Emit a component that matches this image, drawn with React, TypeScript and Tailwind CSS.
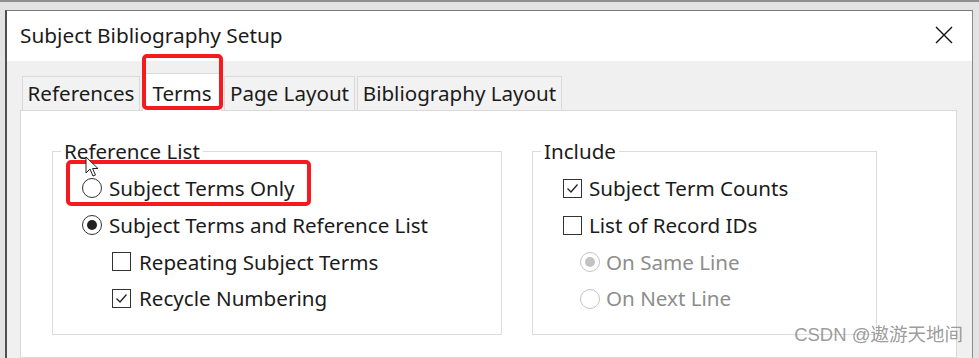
import React from "react"

const font = { fontFamily: '"Noto Sans", "Open Sans", sans-serif' }

function Radio({ checked, disabled }: { checked?: boolean; disabled?: boolean }) {
  return (
    <span
      className={`flex h-[20px] w-[20px] shrink-0 items-center justify-center rounded-full border bg-white ${
        disabled ? "border-[#c4c4c4]" : "border-[#333]"
      }`}
    >
      {checked && (
        <span className={`h-[10px] w-[10px] rounded-full ${disabled ? "bg-[#c2c2c2]" : "bg-[#222]"}`} />
      )}
    </span>
  )
}

function Check({ checked }: { checked?: boolean }) {
  return (
    <span className="flex h-[19px] w-[19px] shrink-0 items-center justify-center border border-[#333] bg-white">
      {checked && (
        <svg width="13" height="11" viewBox="0 0 13 11" fill="none">
          <path d="M1.5 5.5 L5 9 L11.5 1.5" stroke="#222" strokeWidth="1.3" />
        </svg>
      )}
    </span>
  )
}

function Row({ children, className = "" }: { children: React.ReactNode; className?: string }) {
  return <div className={`flex h-[36.8px] items-center ${className}`}>{children}</div>
}

export default function App() {
  return (
    <div
      className="relative flex h-[358px] w-[979px] flex-col overflow-hidden bg-[#e3e3e3] text-[#1b1b1b]"
      style={font}
    >
      {/* fond derrière la boîte */}
      <div className="h-[2px] w-full bg-[#8e8e8e]" />

      {/* boîte de dialogue */}
      <div className="ml-[5px] mt-[8px] flex w-[968px] flex-1 flex-col border-l-2 border-r border-t border-l-[#4f4f4f] border-r-[#8a8a8a] border-t-[#7a7a7a]">
        {/* titre */}
        <div className="flex h-[50px] items-center justify-between bg-white pb-[2px] pl-[13px] pr-[19px]">
          <span className="text-[20.8px] leading-none">Subject Bibliography Setup</span>
          <svg width="18" height="18" viewBox="0 0 18 18" fill="none">
            <path d="M1 1 L17 17 M17 1 L1 17" stroke="#111" strokeWidth="1.4" />
          </svg>
        </div>

        {/* corps */}
        <div className="flex flex-1 flex-col bg-[#f0f0f0] pl-[13px] pr-[15px] pt-[15px]">
          {/* onglets */}
          <div className="flex h-[34px] items-end gap-[2px] pl-[2px] text-[20.6px]">
            <div className="flex h-[34px] w-[118px] items-center justify-center border border-b-0 border-[#d9d9d9] bg-[#f2f2f2]">
              References
            </div>
            <div className="-mb-px z-10 flex h-[38px] w-[80px] items-center justify-center border border-b-0 border-[#d9d9d9] bg-white pt-[2px]">
              Terms
            </div>
            <div className="flex h-[34px] w-[131px] items-center justify-center border border-b-0 border-[#d9d9d9] bg-[#f2f2f2]">
              Page Layout
            </div>
            <div className="flex h-[34px] w-[205px] items-center justify-center border border-b-0 border-[#d9d9d9] bg-[#f2f2f2]">
              Bibliography Layout
            </div>
          </div>

          {/* panneau */}
          <div className="flex flex-1 gap-[30px] border border-[#d9d9d9] bg-white pl-[31px] pt-[28px] text-[20.6px]">
            <fieldset className="h-[196px] w-[450px] border border-[#dcdcdc]">
              <legend className="ml-[8px] px-[3px] leading-[25px]">Reference List</legend>
              <div className="pl-[29px] pt-[6px]">
                <Row className="gap-[7px]">
                  <Radio />
                  <span>Subject Terms Only</span>
                </Row>
                <Row className="gap-[7px]">
                  <Radio checked />
                  <span>Subject Terms and Reference List</span>
                </Row>
                <Row className="gap-[8px] pl-[30px]">
                  <Check />
                  <span>Repeating Subject Terms</span>
                </Row>
                <Row className="gap-[8px] pl-[30px]">
                  <Check checked />
                  <span>Recycle Numbering</span>
                </Row>
              </div>
            </fieldset>

            <fieldset className="h-[196px] w-[345px] border border-[#dcdcdc]">
              <legend className="ml-[8px] px-[3px] leading-[25px]">Include</legend>
              <div className="pl-[30px] pt-[6px]">
                <Row className="gap-[7px]">
                  <Check checked />
                  <span>Subject Term Counts</span>
                </Row>
                <Row className="gap-[7px]">
                  <Check />
                  <span>List of Record IDs</span>
                </Row>
                <Row className="gap-[6px] pl-[17px] text-[#8d8d8d]">
                  <Radio checked disabled />
                  <span>On Same Line</span>
                </Row>
                <Row className="gap-[6px] pl-[17px] text-[#8d8d8d]">
                  <Radio disabled />
                  <span>On Next Line</span>
                </Row>
              </div>
            </fieldset>
          </div>
        </div>
      </div>

      {/* annotations */}
      <div className="absolute left-[142px] top-[54px] z-20 h-[56px] w-[81px] rounded-[5px] border-4 border-[#f51a1f]" />
      <div className="absolute left-[66px] top-[160px] z-20 h-[46px] w-[245px] rounded-[5px] border-4 border-[#f51a1f]" />

      {/* curseur */}
      <svg className="absolute left-[85px] top-[156px] z-30" width="14" height="22" viewBox="0 0 14 22">
        <path d="M1 1 L1 17 L5 13 L8 20 L10.5 19 L7.5 12.5 L13 12.5 Z" fill="#fff" stroke="#222" strokeWidth="1" />
      </svg>

      <span
        className="absolute right-[16px] top-[324px] z-30 text-[18.5px] leading-[22px] text-[#8f8f8f]/90"
        style={{ fontFamily: '"Liberation Sans", "Noto Sans CJK SC", sans-serif' }}
      >
        CSDN @遨游天地间
      </span>
    </div>
  )
}
